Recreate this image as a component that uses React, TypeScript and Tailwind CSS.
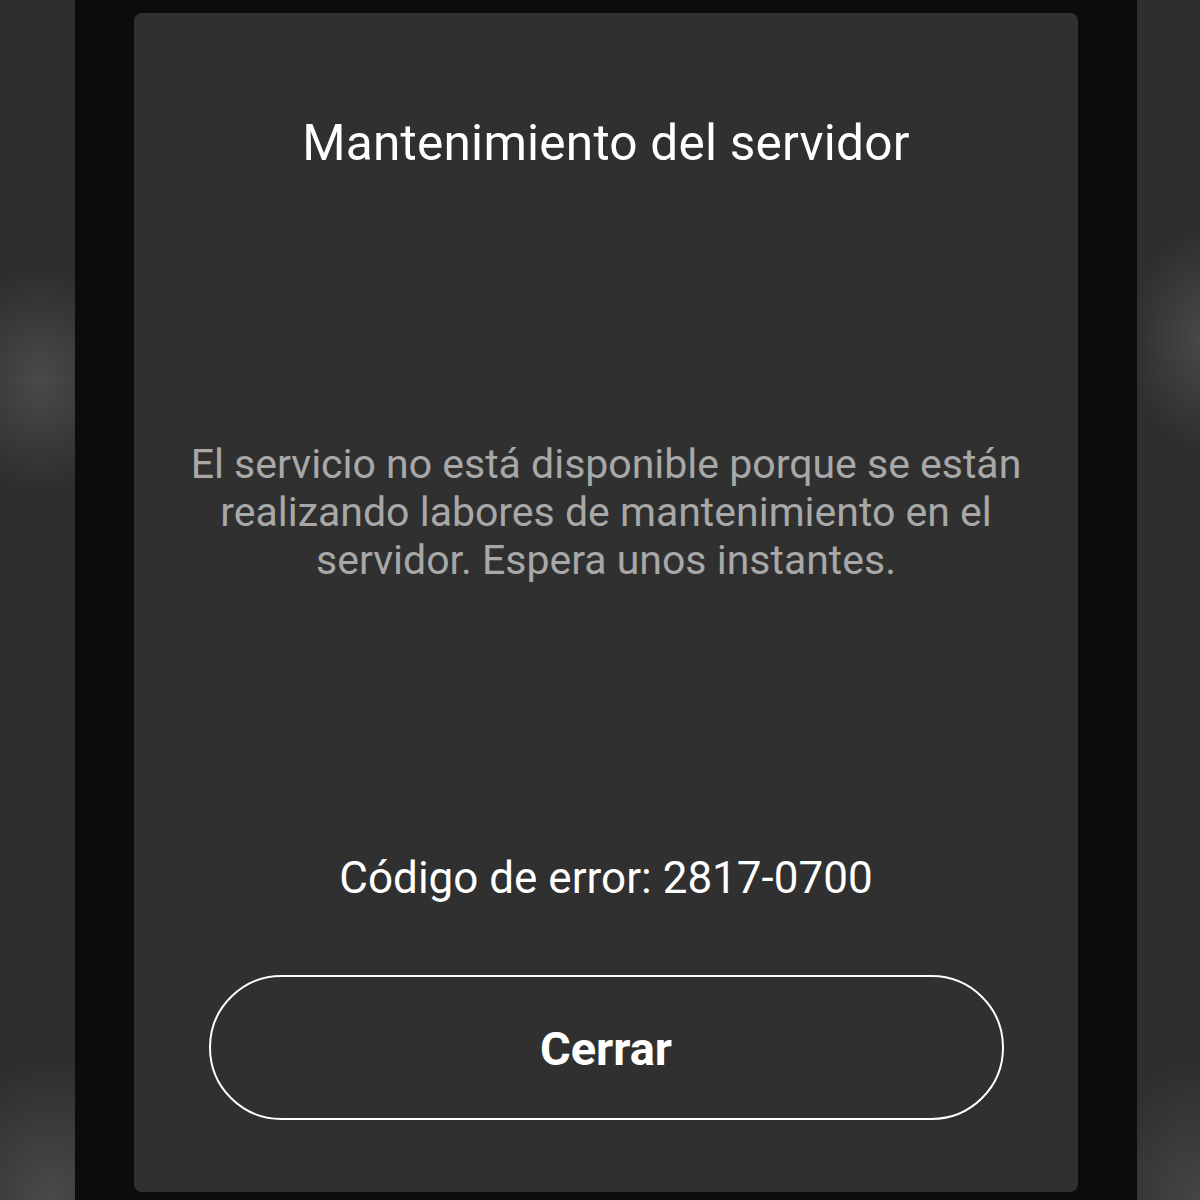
import React from 'react';

const App: React.FC = () => {
  return (
    <div className="flex h-[1200px] w-[1200px] overflow-hidden bg-[#2e2e2e] font-['Roboto',sans-serif]">
      {/* blurred backdrop, left */}
      <div className="h-full w-[75px] shrink-0 bg-[radial-gradient(ellipse_90px_110px_at_40px_380px,#4a4a4a,transparent),radial-gradient(ellipse_110px_140px_at_50px_1200px,#4a4a4a,transparent)]" />

      <div className="flex h-full w-[1062px] shrink-0 flex-col bg-[#0c0c0c] px-[59px] pt-[13px] pb-[8px]">
        <div className="flex flex-1 flex-col items-center rounded-lg bg-[#303030]">
          <h1 className="mt-[100px] text-[49.6px] leading-[60px] font-normal tracking-[0.2px] text-white">
            Mantenimiento del servidor
          </h1>

          <p className="mt-[267px] w-[870px] text-center text-[41px] leading-[48px] text-[#a8a8a8]">
            El servicio no está disponible porque se están realizando labores de mantenimiento en el servidor. Espera unos instantes.
          </p>

          <div className="mt-[268px] text-[44px] leading-[52px] text-white">Código de error: 2817-0700</div>

          <button className="mt-[71px] flex h-[145px] w-[795px] items-center justify-center rounded-full border-2 border-white bg-transparent pt-[4px] text-[47px] font-bold text-white">
            Cerrar
          </button>
        </div>
      </div>

      {/* blurred backdrop, right */}
      <div className="h-full flex-1 bg-[radial-gradient(ellipse_80px_110px_at_70px_340px,#4a4a4a,transparent),radial-gradient(ellipse_100px_140px_at_60px_1200px,#454545,transparent)]" />
    </div>
  );
};

export default App;
